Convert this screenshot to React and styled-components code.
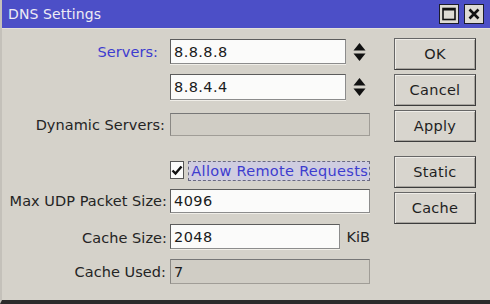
import styled, { createGlobalStyle } from 'styled-components';

const GlobalStyle = createGlobalStyle`
  html, body {
    margin: 0;
    padding: 0;
    background: #d5d2ca;
  }
  body {
    width: 490px;
    height: 304px;
    overflow: hidden;
    font-family: 'DejaVu Sans', Verdana, sans-serif;
  }
`;

const Window = styled.div`
  width: 490px;
  height: 304px;
  box-sizing: border-box;
  display: flex;
  flex-direction: column;
  background: #d5d2ca;
  border-bottom: 4px solid #2b2b2b;
  border-left: 2px solid #c4c1ba;
`;

const TitleBar = styled.div`
  height: 28px;
  flex: none;
  display: flex;
  align-items: center;
  justify-content: space-between;
  padding: 0 6px 0 6px;
  background: #4c4fc7;
  border-bottom: 1px solid #e4e1da;
`;

const Title = styled.span`
  color: #ecebf4;
  font-size: 14px;
  letter-spacing: 0.1px;
  padding-bottom: 1px;
`;

const TitleButtons = styled.div`
  display: flex;
  gap: 5px;
`;

const TitleButton = styled.div`
  width: 20px;
  height: 20px;
  box-sizing: border-box;
  background: #dedbd4;
  border: 1px solid #1c1c2c;
  display: flex;
  align-items: center;
  justify-content: center;
`;

const Body = styled.div`
  flex: 1;
  display: flex;
  padding-top: 9px;
`;

const Form = styled.div`
  display: grid;
  grid-template-columns: 165px 200px;
  grid-template-rows: 25px 26px 26px 33px 24px 26px 25px;
  column-gap: 3px;
  row-gap: 10px;
  margin-top: 1px;
  align-content: start;
`;

const Label = styled.span`
  align-self: ${(p) => p.$align || 'center'};
  justify-self: end;
  font-size: 14.5px;
  letter-spacing: 0.05px;
  color: ${(p) => (p.$link ? '#3d3ccf' : '#242424')};
  padding-right: ${(p) => p.$pad || 0}px;
  padding-bottom: ${(p) => p.$padBottom || 0}px;
  white-space: nowrap;
`;

const FieldRow = styled.div`
  display: flex;
  align-items: ${(p) => p.$align || 'stretch'};
  gap: 7px;
`;

const Input = styled.div`
  box-sizing: border-box;
  width: ${(p) => p.$width || 200}px;
  height: ${(p) => p.$height || 25}px;
  background: #fbfbfa;
  border: 1px solid #8c8c8c;
  border-top-color: #5c5c5c;
  border-left-color: #5c5c5c;
  box-shadow: 0 1px 0 #f0eee8;
  padding: 0 3px;
  display: flex;
  align-items: center;
  font-size: 14.5px;
  letter-spacing: 0.4px;
  color: #1a1a1a;
`;

const Disabled = styled(Input)`
  width: 200px;
  height: ${(p) => p.$height || 23}px;
  background: #d0cdc5;
  border-color: #a09d97;
  border-top-color: #777;
  border-left-color: #8a8884;
  box-shadow: none;
`;

const Unit = styled.span`
  font-size: 14.5px;
  color: #242424;
  padding-bottom: 4px;
`;

const CheckRow = styled.div`
  display: flex;
  align-items: flex-end;
  gap: 4px;
`;

const CheckBox = styled.div`
  box-sizing: border-box;
  width: 17px;
  height: 18px;
  background: #fbfbfa;
  border: 1px solid #555;
  display: flex;
  align-items: center;
  justify-content: center;
`;

const FocusLabel = styled.span`
  height: 20px;
  box-sizing: border-box;
  border: 1px dashed #6a6a80;
  background: #cfcde0;
  color: #3d3ccf;
  font-size: 14.5px;
  letter-spacing: 0.3px;
  padding: 0 1px 0 2px;
  display: flex;
  align-items: center;
  margin-bottom: -2px;
  white-space: nowrap;
`;

const ButtonColumn = styled.div`
  width: 82px;
  margin-left: 24px;
  display: flex;
  flex-direction: column;
  gap: 14px;
`;

const ButtonGroup = styled.div`
  display: flex;
  flex-direction: column;
  gap: 4px;
`;

const Button = styled.div`
  box-sizing: border-box;
  height: 32px;
  background: #d8d5ce;
  border: 1px solid #666;
  border-right-color: #3c3c3c;
  border-bottom-color: #3c3c3c;
  box-shadow: inset 1px 1px 0 #efede8, inset -1px -1px 0 #a8a59f;
  display: flex;
  align-items: center;
  justify-content: center;
  font-size: 14.5px;
  letter-spacing: 0.3px;
  color: #1f1f1f;
`;

function Spinner() {
  return (
    <svg width="13" height="20" viewBox="0 0 13 20">
      <path d="M6.5 1 L12.5 8.5 L0.5 8.5 Z" fill="#111" />
      <path d="M0.5 11.5 L12.5 11.5 L6.5 19 Z" fill="#111" />
    </svg>
  );
}

export default function App() {
  return (
    <>
      <GlobalStyle />
      <Window>
        <TitleBar>
          <Title>DNS Settings</Title>
          <TitleButtons>
            <TitleButton>
              <svg width="14" height="14" viewBox="0 0 14 14">
                <rect x="1" y="1.5" width="12" height="11" fill="none" stroke="#111" strokeWidth="1.6" />
                <rect x="1" y="1" width="12" height="2.5" fill="#111" />
              </svg>
            </TitleButton>
            <TitleButton>
              <svg width="14" height="14" viewBox="0 0 14 14">
                <path d="M2.5 2.5 L11.5 11.5 M11.5 2.5 L2.5 11.5" stroke="#111" strokeWidth="2.6" />
              </svg>
            </TitleButton>
          </TitleButtons>
        </TitleBar>
        <Body>
          <Form>
            <Label $link $pad={9}>Servers:</Label>
            <FieldRow $align="center">
              <Input $width={176}>8.8.8.8</Input>
              <Spinner />
            </FieldRow>

            <span />
            <FieldRow $align="center">
              <Input $width={176} $height={26}>8.8.4.4</Input>
              <Spinner />
            </FieldRow>

            <Label $align="end" $padBottom={3} $pad={2}>Dynamic Servers:</Label>
            <FieldRow $align="flex-end">
              <Disabled />
            </FieldRow>

            <span />
            <CheckRow>
              <CheckBox>
                <svg width="12" height="11" viewBox="0 0 12 11">
                  <path d="M1.5 5.5 L4.5 8.5 L10.5 1.5" fill="none" stroke="#111" strokeWidth="2.4" />
                </svg>
              </CheckBox>
              <FocusLabel>Allow Remote Requests</FocusLabel>
            </CheckRow>

            <Label>Max UDP Packet Size:</Label>
            <FieldRow>
              <Input $height={24}>4096</Input>
            </FieldRow>

            <Label $align="end" $padBottom={3}>Cache Size:</Label>
            <FieldRow $align="flex-end">
              <Input $width={172}>2048</Input>
              <Unit>KiB</Unit>
            </FieldRow>

            <Label $pad={1}>Cache Used:</Label>
            <FieldRow>
              <Disabled $height={25}>7</Disabled>
            </FieldRow>
          </Form>
          <ButtonColumn>
            <ButtonGroup>
              <Button>OK</Button>
              <Button>Cancel</Button>
              <Button>Apply</Button>
            </ButtonGroup>
            <ButtonGroup>
              <Button>Static</Button>
              <Button>Cache</Button>
            </ButtonGroup>
          </ButtonColumn>
        </Body>
      </Window>
    </>
  );
}
